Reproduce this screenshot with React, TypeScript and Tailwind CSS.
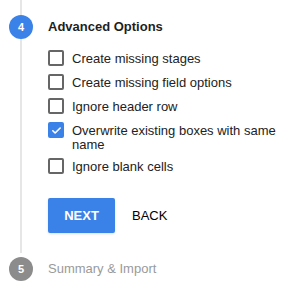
import React from 'react';

const options = [
  { label: 'Create missing stages', checked: false },
  { label: 'Create missing field options', checked: false },
  { label: 'Ignore header row', checked: false },
  { label: 'Overwrite existing boxes with same name', checked: true },
  { label: 'Ignore blank cells', checked: false },
];

const Checkbox = ({ checked }: { checked: boolean }) =>
  checked ? (
    <span className="flex h-[16px] w-[16px] shrink-0 items-center justify-center rounded-[2px] bg-[#3a82e8]">
      <svg width="11" height="11" viewBox="0 0 24 24" fill="none" stroke="white" strokeWidth="3.5" strokeLinecap="round" strokeLinejoin="round">
        <path d="M4 12.5l5 5L20 6.5" />
      </svg>
    </span>
  ) : (
    <span className="h-[16px] w-[16px] shrink-0 rounded-[2px] border-2 border-[#666] bg-white" />
  );

export default function App() {
  return (
    <div className="flex h-[307px] w-[291px] flex-col bg-white text-[13px] text-[#222]" style={{ fontFamily: '"Liberation Sans", Arial, sans-serif' }}>
      {/* Step 4 */}
      <div className="flex h-[253px]">
        <div className="flex w-[42px] flex-col items-center">
          <div className="h-[15px] w-[2px] bg-[#e6e6e6]" />
          <div className="flex h-[24px] w-[24px] items-center justify-center rounded-full bg-[#3a82e8] text-[11px] font-bold text-white">4</div>
          <div className="w-[2px] flex-1 bg-[#e6e6e6]" />
        </div>
        <div className="ml-[6px] flex flex-col pt-[15px]">
          <div className="flex h-[24px] items-center font-bold text-[#1f1f1f]">Advanced Options</div>
          <ul className="mt-[11px] flex flex-col gap-[8px]">
            {options.map((o) => (
              <li key={o.label} className="flex items-start gap-[8px]">
                <Checkbox checked={o.checked} />
                <span className="mt-[2px] mb-[-2px] w-[210px] leading-[14px]">{o.label}</span>
              </li>
            ))}
          </ul>
          <div className="mt-[24px] flex items-center gap-[17px]">
            <button className="h-[35px] w-[67px] rounded-[2px] bg-[#3a82e8] font-bold text-white shadow-sm">NEXT</button>
            <button className="font-medium text-black">BACK</button>
          </div>
        </div>
      </div>
      {/* Step 5 */}
      <div className="mt-[4px] flex items-center">
        <div className="flex w-[42px] justify-center">
          <div className="flex h-[24px] w-[24px] items-center justify-center rounded-full bg-[#8c8c8c] text-[11px] font-bold text-white">5</div>
        </div>
        <span className="ml-[6px] text-[#9a9a9a]">Summary &amp; Import</span>
      </div>
    </div>
  );
}
